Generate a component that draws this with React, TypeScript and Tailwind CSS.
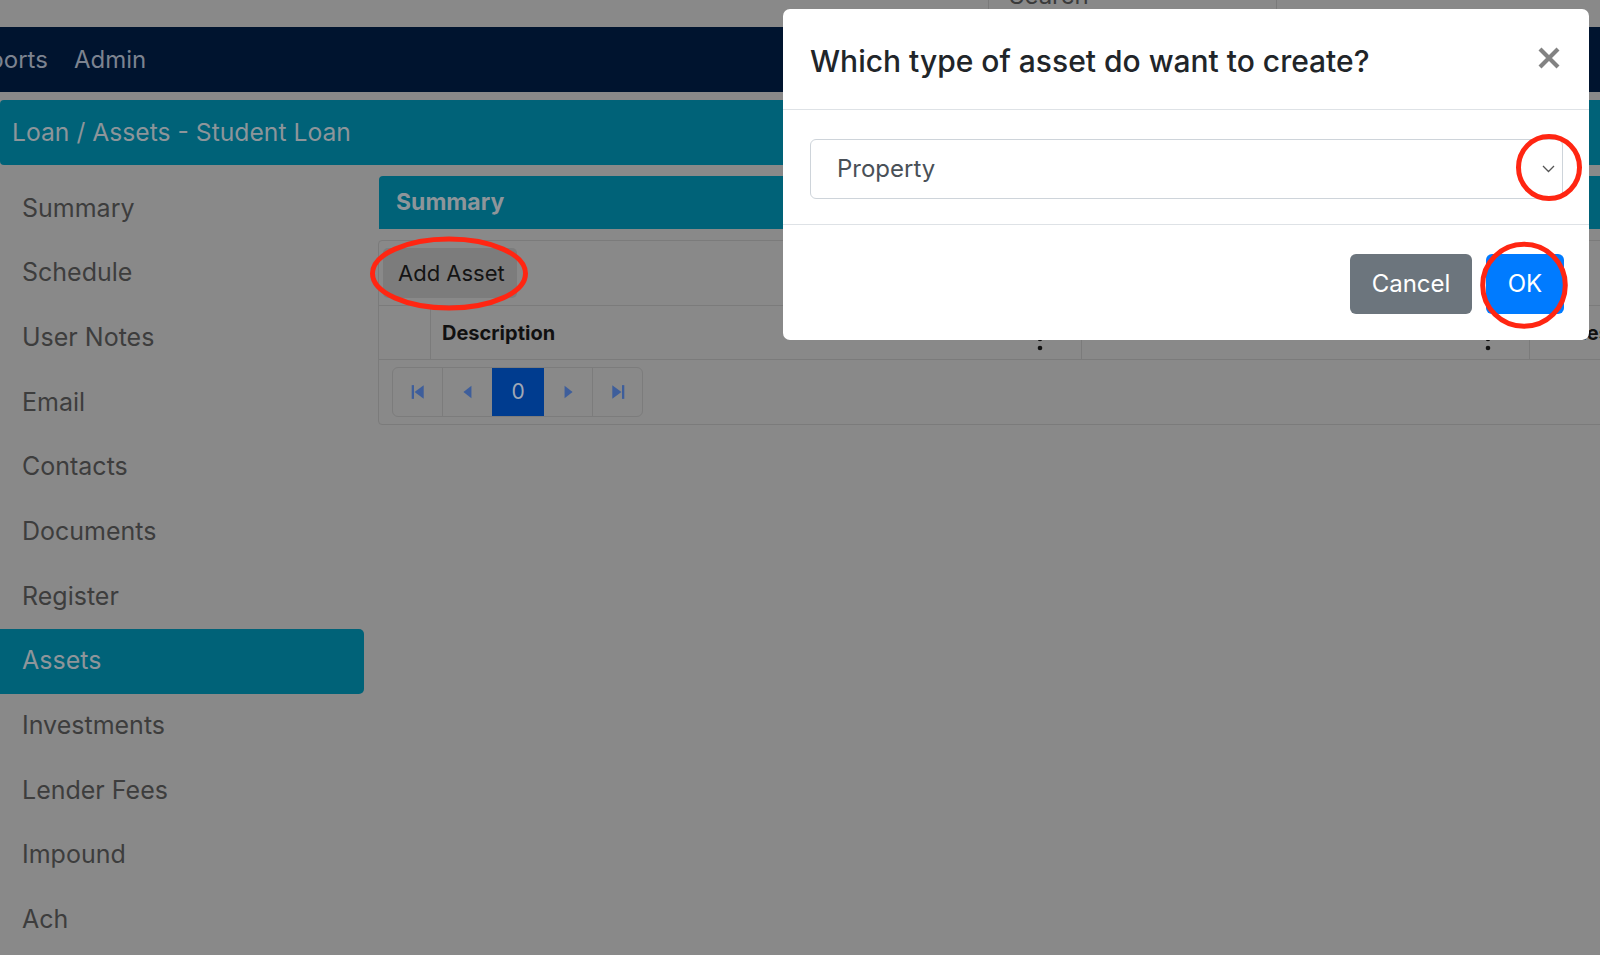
import React from "react";

const items = [
  "Summary",
  "Schedule",
  "User Notes",
  "Email",
  "Contacts",
  "Documents",
  "Register",
  "Assets",
  "Investments",
  "Lender Fees",
  "Impound",
  "Ach",
];

function Kebab() {
  return (
    <svg width="6" height="24" viewBox="0 0 6 24" className="absolute right-[38px] top-[21px]">
      <circle cx="3" cy="3" r="2.3" fill="#111" />
      <circle cx="3" cy="12" r="2.3" fill="#111" />
      <circle cx="3" cy="21" r="2.3" fill="#111" />
    </svg>
  );
}

function PagerIcon({ kind }: { kind: "first" | "prev" | "next" | "last" }) {
  const c = "#3e5e9b";
  return (
    <svg width="16" height="16" viewBox="0 0 14 14">
      {kind === "first" && (
        <>
          <rect x="1.5" y="1" width="2" height="12" fill={c} />
          <polygon points="12,1 4,7 12,13" fill={c} />
        </>
      )}
      {kind === "prev" && <polygon points="10,1.5 3,7 10,12.5" fill={c} />}
      {kind === "next" && <polygon points="4,1.5 11,7 4,12.5" fill={c} />}
      {kind === "last" && (
        <>
          <polygon points="2,1 10,7 2,13" fill={c} />
          <rect x="10.5" y="1" width="2" height="12" fill={c} />
        </>
      )}
    </svg>
  );
}

export default function App() {
  return (
    <div className="relative w-[1600px] h-[955px] overflow-hidden bg-[#898989] font-['Inter',sans-serif]">
      {/* top strip with search box */}
      <div className="h-[27px] flex">
        <div className="ml-[988px] w-[289px] h-full border-x border-[#7a7a7a] overflow-hidden">
          <span className="block pl-[20px] -mt-[16px] text-[24px] leading-none text-[#3a3a3a]">Search</span>
        </div>
      </div>

      {/* nav */}
      <div className="h-[65px] bg-[#00142f] flex items-center gap-[26px] text-[24px] text-[#7c8390] overflow-hidden">
        <span className="-ml-[40px]">Reports</span>
        <span>Admin</span>
      </div>

      {/* title bar */}
      <div className="mt-[8px] h-[65px] bg-[#006278] rounded-l-[4px] flex items-center pl-[12px] text-[24.7px] text-[#8d959a]">
        Loan / Assets - Student Loan
      </div>

      {/* content */}
      <div className="flex pt-[11px]">
        <div className="w-[364px] shrink-0 flex flex-col">
          {items.map((it) => (
            <div
              key={it}
              className={
                it === "Assets"
                  ? "h-[64.7px] flex items-center pl-[22px] text-[25px] bg-[#006278] rounded-r-[5px] text-[#8e959a]"
                  : "h-[64.7px] flex items-center pl-[22px] text-[25px] text-[#3d3d3d]"
              }
            >
              {it}
            </div>
          ))}
        </div>

        <div className="ml-[14px] w-[1300px] shrink-0 flex flex-col">
          <div className="ml-[1px] h-[53px] bg-[#006278] rounded-t-[4px] flex items-center pl-[17px] text-[23px] font-bold text-[#8e959a]">
            Summary
          </div>
          <div className="mt-[11px] border border-[#7b7b7b] rounded-[4px]">
            <div className="h-[64px] flex items-center pl-[4px]">
              <div className="w-[134px] h-[50px] rounded-[5px] bg-[#7c7c7c] flex items-center pl-[15px] text-[22px] text-[#141414]">
                Add Asset
              </div>
            </div>
            <div className="h-[55px] flex border-y border-[#7b7b7b]">
              <div className="w-[52px] shrink-0 border-r border-[#7b7b7b]" />
              <div className="relative w-[651px] shrink-0 border-r border-[#7b7b7b] flex items-center pl-[11px] text-[20px] font-bold text-[#111]">
                Description
                <Kebab />
              </div>
              <div className="relative w-[448px] shrink-0 border-r border-[#7b7b7b]">
                <Kebab />
              </div>
              <div className="flex items-center pl-[18px] text-[20px] font-bold text-[#111]">Series</div>
            </div>
            <div className="h-[64px] pl-[13px] pt-[7px]">
              <div className="inline-flex h-[50px] border border-[#7c7c7c] rounded-[6px] overflow-hidden">
                <div className="w-[50px] flex items-center justify-center border-r border-[#7c7c7c]">
                  <PagerIcon kind="first" />
                </div>
                <div className="w-[49px] flex items-center justify-center">
                  <PagerIcon kind="prev" />
                </div>
                <div className="w-[52px] flex items-center justify-center bg-[#003c8f] text-[21px] text-[#a0a8b5]">0</div>
                <div className="w-[49px] flex items-center justify-center border-r border-[#7c7c7c]">
                  <PagerIcon kind="next" />
                </div>
                <div className="w-[49px] flex items-center justify-center">
                  <PagerIcon kind="last" />
                </div>
              </div>
            </div>
          </div>
        </div>
      </div>

      {/* modal */}
      <div className="absolute left-[783px] top-[9px] w-[806px] h-[331px] bg-white rounded-[7px] flex flex-col">
        <div className="h-[101px] shrink-0 border-b border-[#dee2e6] flex items-center justify-between pl-[27px] pr-[27px] pt-[4px]">
          <span className="text-[30px] font-medium text-[#212529]">Which type of asset do want to create?</span>
          <svg width="22" height="22" viewBox="0 0 22 22" className="mr-[2px] -mt-[6px]">
            <path d="M2 2 L20 20 M20 2 L2 20" stroke="#828282" strokeWidth="4.2" />
          </svg>
        </div>
        <div className="h-[115px] shrink-0 border-b border-[#dee2e6] flex items-center pl-[27px] pt-[4px]">
          <div className="w-[753px] h-[60px] border border-[#ced4da] rounded-[6px] flex items-center justify-between pl-[26px] pr-[7px] text-[24px] text-[#495057]">
            <span>Property</span>
            <svg width="13" height="8" viewBox="0 0 13 8">
              <path d="M1 1 L6.5 6.5 L12 1" fill="none" stroke="#555" strokeWidth="1.3" />
            </svg>
          </div>
        </div>
        <div className="flex-1 flex items-center justify-end gap-[14px] pr-[25px] pt-[2px]">
          <div className="w-[122px] h-[60px] rounded-[6px] bg-[#6c757d] flex items-center justify-center text-[24px] text-white">
            Cancel
          </div>
          <div className="w-[78px] h-[60px] rounded-[6px] bg-[#007bff] flex items-center justify-center text-[24px] text-white">
            OK
          </div>
        </div>
      </div>

      {/* red annotations */}
      <svg className="absolute left-0 top-0 pointer-events-none" width="1600" height="955" viewBox="0 0 1600 955">
        <ellipse cx="449" cy="273.5" rx="76.5" ry="34.5" fill="none" stroke="#ff2612" strokeWidth="5" />
        <ellipse cx="1549" cy="167.5" rx="30.5" ry="31" fill="none" stroke="#ff2612" strokeWidth="5" />
        <ellipse cx="1524" cy="285.3" rx="41.3" ry="41" fill="none" stroke="#ff2612" strokeWidth="5" />
      </svg>
    </div>
  );
}
